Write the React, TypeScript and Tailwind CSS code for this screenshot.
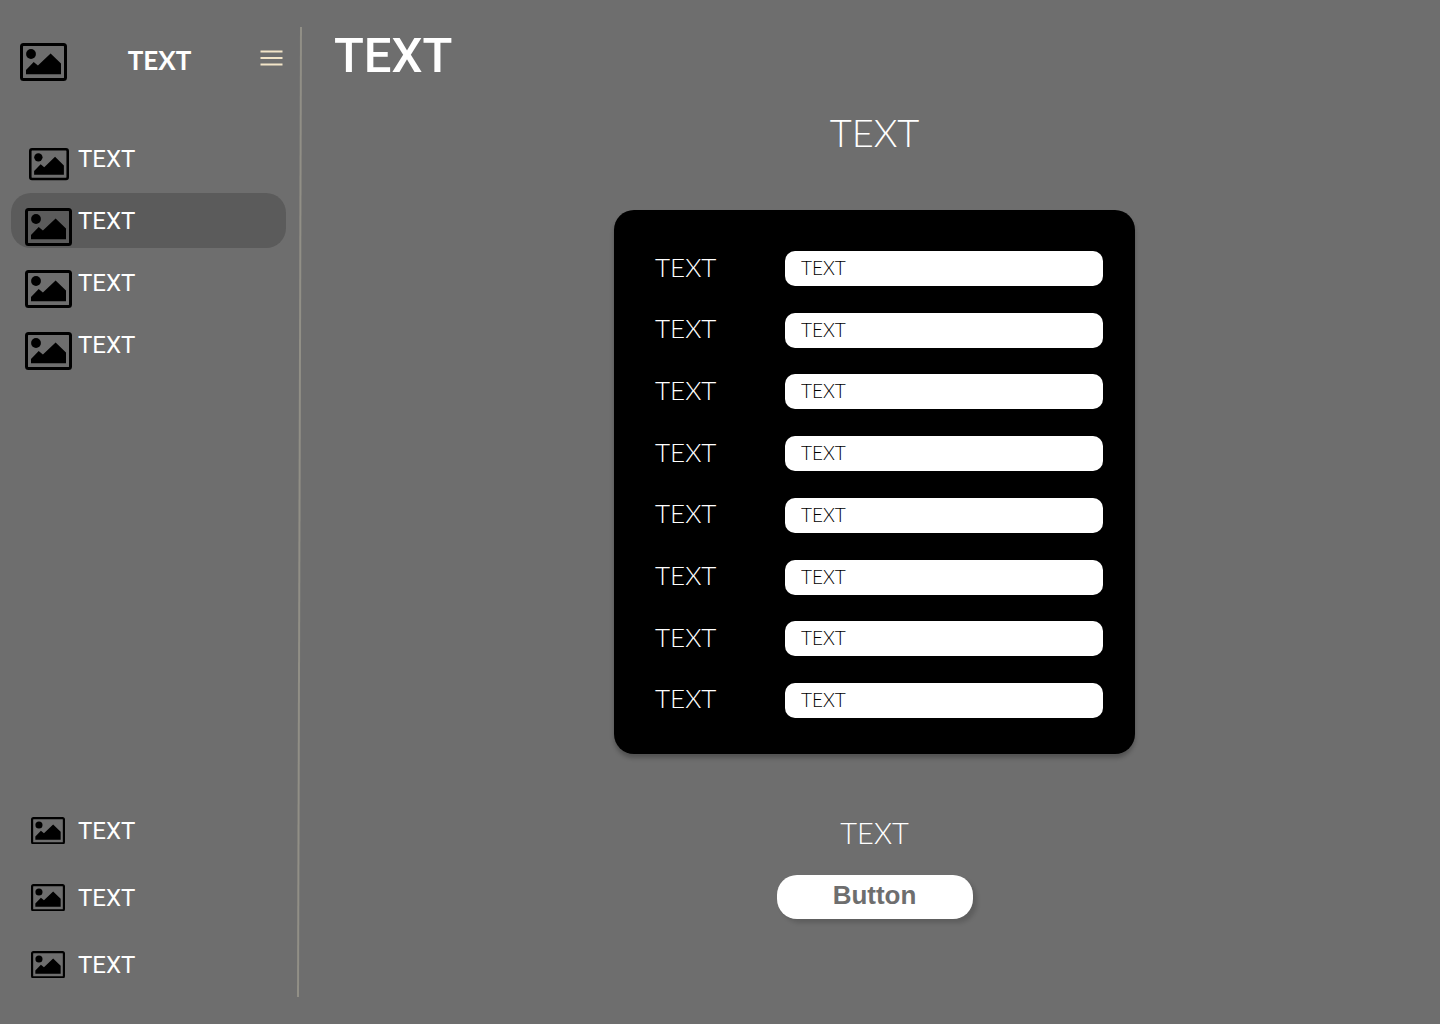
import React from "react";

function Picture({ className }: { className: string }) {
  return (
    <svg viewBox="0 0 47 38" className={className} aria-hidden="true">
      <rect x="1.5" y="1.5" width="44" height="35" rx="2" fill="none" stroke="#000" strokeWidth="3" />
      <circle cx="11" cy="11" r="4.9" />
      <path d="M6 31.3V27l7.7-8 4.2 3.6L30.6 10.4 41 20.5v10.8z" />
    </svg>
  );
}

const mainLinks = [
  { id: "first", icon: "w-10", row: "" },
  { id: "second", icon: "w-[47px]", row: "bg-[#5b5b5b]" },
  { id: "third", icon: "w-[47px]", row: "" },
  { id: "fourth", icon: "w-[47px]", row: "" },
];

const footerLinks = ["fifth", "sixth", "seventh"];

const fields = ["one", "two", "three", "four", "five", "six", "seven", "eight"];

function Sidebar() {
  return (
    <aside className="flex w-[300px] shrink-0 flex-col pt-[37px] pb-[26px] text-2xl font-normal text-white">
      <div className="flex h-[46px] items-center justify-between pr-[17px] pl-5">
        <Picture className="mt-1 w-[47px]" />
        <span className="pr-2 [font-family:Lato,sans-serif] text-[26px] font-bold">TEXT</span>
        <button type="button" aria-label="Menu" className="pb-1">
          <svg viewBox="0 0 23 16" className="h-4 w-[23px]" stroke="#f3e5c8" strokeWidth="2">
            <path d="M0.5 1.5h22M0.5 8h22M0.5 14.5h22" />
          </svg>
        </button>
      </div>
      <nav className="mt-12 flex flex-col gap-[7px] pr-[14px] pl-[11px]">
        {mainLinks.map((l) => (
          <a key={l.id} href={`#${l.id}`} className={`flex h-[55px] items-center rounded-[20px] ${l.row}`}>
            <span className="flex w-[67px] justify-center pt-3 pl-2">
              <Picture className={l.icon} />
            </span>
            TEXT
          </a>
        ))}
      </nav>
      <nav className="mt-auto flex flex-col pl-[11px]">
        {footerLinks.map((id) => (
          <a key={id} href={`#${id}`} className="flex h-[67px] items-center">
            <span className="flex w-[67px] justify-center pl-[6px]">
              <Picture className="w-[34px]" />
            </span>
            TEXT
          </a>
        ))}
      </nav>
    </aside>
  );
}

export default function App() {
  return (
    <div className="flex min-h-screen bg-[#6e6e6e] [font-family:Roboto,sans-serif]">
      <Sidebar />
      <div className="-ml-[3px] flex w-[5px] shrink-0 py-[27px]">
        <svg viewBox="0 0 5 970" preserveAspectRatio="none" className="w-[5px] flex-1" aria-hidden="true">
          <path d="M4 0L1 970" stroke="#918f86" strokeWidth="2" />
        </svg>
      </div>
      <main className="flex flex-1 flex-col pt-[26px] pr-[25px] pb-10 pl-8 [font-family:Lato,sans-serif] font-light text-white">
        <h1 className="[font-family:Roboto,sans-serif] text-[49px] leading-[60px] font-medium">TEXT</h1>
        <div className="flex flex-col items-center">
          <h2 className="mt-[22px] text-[38px] leading-[48px]">TEXT</h2>
          <form
            id="details"
            className="mt-[54px] flex h-[544px] w-[521px] flex-col justify-between rounded-[20px] bg-black pt-[41px] pr-8 pb-9 pl-[41px] shadow-[0_4px_4px_rgba(0,0,0,0.25)]"
          >
            {fields.map((id) => (
              <div key={id} className="flex h-[35px] items-center">
                <label htmlFor={id} className="w-[130px] pb-1 text-[26px] leading-8">
                  TEXT
                </label>
                <input
                  id={id}
                  type="text"
                  defaultValue="TEXT"
                  className="h-[35px] min-w-0 flex-1 rounded-[10px] bg-white px-4 pb-0.5 text-[19px] text-black outline-none"
                />
              </div>
            ))}
          </form>
          <p className="mt-[61px] text-[29px] leading-9">TEXT</p>
          <button
            type="submit"
            form="details"
            className="mt-6 h-11 w-[196px] rounded-[20px] bg-white pb-1 [font-family:'Liberation_Sans',sans-serif] text-[26px] font-bold text-[#6e6e6e] shadow-[4px_4px_4px_rgba(0,0,0,0.15)]"
          >
            Button
          </button>
        </div>
      </main>
    </div>
  );
}
